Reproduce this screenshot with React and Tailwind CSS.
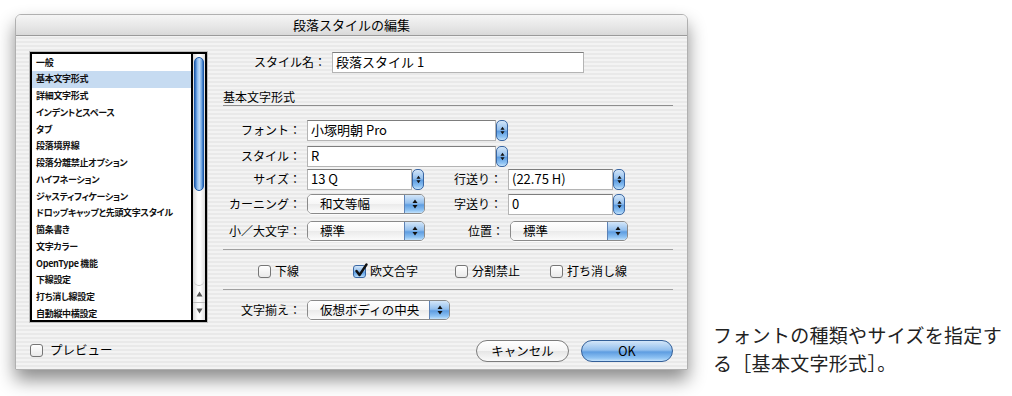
import React from 'react'

const jp = "font-['Noto_Sans_CJK_JP','Noto_Sans',sans-serif]"

const items = [
  '一般',
  '基本文字形式',
  '詳細文字形式',
  'インデントとスペース',
  'タブ',
  '段落境界線',
  '段落分離禁止オプション',
  'ハイフネーション',
  'ジャスティフィケーション',
  'ドロップキャップと先頭文字スタイル',
  '箇条書き',
  '文字カラー',
  'OpenType 機能',
  '下線設定',
  '打ち消し線設定',
  '自動縦中横設定',
]

const aqua =
  'bg-[linear-gradient(180deg,#d3e6f9_0%,#94c0ee_45%,#5e9de1_55%,#8fc3f3_85%,#c4e2fb_100%)]'

function Arrows({ w = 6, h = 12 }) {
  return (
    <svg width={w} height={h} viewBox="0 0 6 12">
      <path d="M3 1.5 L5.5 5 H0.5 Z" fill="#111" />
      <path d="M3 10.5 L5.5 7 H0.5 Z" fill="#111" />
    </svg>
  )
}

function Stepper() {
  return (
    <div
      className={`w-[12px] h-[21px] rounded-[5px] border border-[#3a67a3] flex items-center justify-center ${aqua}`}
    >
      <Arrows w={5} h={11} />
    </div>
  )
}

function Field({ text, width }) {
  return (
    <div
      className="h-[21px] bg-white border border-[#b4b4b4] border-t-[#7d7d7d] text-[13px] leading-[17px] pl-[3px] text-black"
      style={{ width }}
    >
      {text}
    </div>
  )
}

function Combo({ text, width }) {
  return (
    <div className="flex items-center">
      <Field text={text} width={width} />
      <Stepper />
    </div>
  )
}

function Popup({ text, width = 118 }) {
  return (
    <div
      className="h-[20px] flex rounded-[5px] border border-[#8a8a8a] overflow-hidden shadow-[0_1px_0_rgba(255,255,255,0.8)]"
      style={{ width }}
    >
      <div className="flex-1 bg-[linear-gradient(180deg,#ffffff_0%,#f6f6f6_50%,#ebebeb_52%,#fbfbfb_100%)] text-[12.5px] leading-[18px] pl-[12px] text-black">
        {text}
      </div>
      <div className={`w-[20px] border-l border-[#5d82b5] flex items-center justify-center ${aqua}`}>
        <Arrows w={6} h={12} />
      </div>
    </div>
  )
}

function Check({ label, checked }) {
  return (
    <div className="flex items-center gap-[4px]">
      <div
        className={`relative w-[13px] h-[13px] rounded-[3px] border ${
          checked ? `border-[#3a67a3] ${aqua}` : 'border-[#767676] bg-[linear-gradient(180deg,#ffffff,#e9e9e9)]'
        }`}
      >
        {checked && (
          <svg className="absolute -top-[3px] left-[0px]" width="15" height="15" viewBox="0 0 15 15">
            <path d="M2.5 8 L5.5 12 L12.5 1.5" fill="none" stroke="#111" strokeWidth="2.4" strokeLinecap="round" strokeLinejoin="round" />
          </svg>
        )}
      </div>
      <span className="text-[12px] leading-[14px] text-black">{label}</span>
    </div>
  )
}

function Label({ children, w = 84 }) {
  return (
    <div className="text-right pr-[6px] text-[12px] text-black shrink-0" style={{ width: w }}>
      {children}
    </div>
  )
}

function Scrollbar() {
  return (
    <div className="w-[14px] flex flex-col border-l-2 border-black bg-[linear-gradient(90deg,#d9d9d9,#ffffff_40%,#ffffff_60%,#dedede)]">
      <div className="flex-1 px-[1px] pt-[3px] flex flex-col">
        <div className="h-[134px] rounded-full border border-[#1d5aa8] bg-[linear-gradient(90deg,#2a68bb,#8dbcf0_30%,#c0dcf8_55%,#6aa2e0_85%,#2a68bb)]" />
        <div className="flex-1 rounded-b-full border-b border-[#c4c4c4]" />
      </div>
      <div className="h-[34px] flex flex-col items-center">
        <div className="h-[17px] flex items-center justify-center border-b border-[#bdbdbd] w-full">
          <svg width="7" height="6" viewBox="0 0 7 6">
            <path d="M3.5 0.5 L6.5 5.5 H0.5 Z" fill="#555" />
          </svg>
        </div>
        <div className="h-[16px] flex items-center justify-center">
          <svg width="7" height="6" viewBox="0 0 7 6">
            <path d="M3.5 5.5 L6.5 0.5 H0.5 Z" fill="#555" />
          </svg>
        </div>
      </div>
    </div>
  )
}

function ListBox() {
  return (
    <div className="mt-[1px] h-[270px] border-2 border-black flex bg-white shadow-[0_0_0_1px_#bdbdbd]">
      <div className="flex-1 overflow-hidden">
        {items.map((it, i) => (
          <div
            key={it}
            className={`h-[16.75px] pl-[4px] flex items-center text-[9px] tracking-[-0.3px] font-bold text-[#111] [font-feature-settings:'palt'] whitespace-nowrap ${
              i === 1 ? 'bg-[#c6dbf1]' : ''
            }`}
          >
            {it}
          </div>
        ))}
      </div>
      <Scrollbar />
    </div>
  )
}

export default function App() {
  return (
    <div className={`w-[1012px] h-[396px] bg-white flex ${jp}`}>
      <div className="ml-[15px] mt-[14px] w-[673px] h-[356px] flex flex-col rounded-t-[6px] border border-[#b0b0b0] bg-[repeating-linear-gradient(180deg,#f3f3f3_0px,#f3f3f3_2px,#e9e9e9_2px,#e9e9e9_4px)] shadow-[0_10px_18px_rgba(0,0,0,0.45)] overflow-hidden">
        {/* title bar */}
        <div className="h-[21px] shrink-0 flex items-center justify-center bg-[linear-gradient(180deg,#f5f5f5,#e6e6e6_60%,#d9d9d9)] border-b border-[#9a9a9a] text-[13px] text-black">
          段落スタイルの編集
        </div>

        <div className="flex px-[14px] pt-[15px]">
          {/* left: category list */}
          <div className="w-[177px] shrink-0 flex flex-col">
            <ListBox />
            <div className="mt-[19px]">
              <div className="flex items-center gap-[7px]">
                <div className="w-[13px] h-[13px] rounded-[3px] border border-[#767676] bg-[linear-gradient(180deg,#ffffff,#e9e9e9)]" />
                <span className="text-[12.5px] text-black">プレビュー</span>
              </div>
            </div>
          </div>

          {/* right: settings */}
          <div className="ml-[16px] w-[450px] flex flex-col">
            <div className="flex items-center h-[22px]">
              <Label w={109}>スタイル名：</Label>
              <Field text="段落スタイル 1" width={252} />
            </div>

            <div className="mt-[16px] h-[17px] border-b border-[#8e8e8e] text-[12px] leading-[16px] text-black">
              基本文字形式
            </div>

            <div className="mt-[13px] flex items-center h-[22px]">
              <Label>フォント：</Label>
              <Combo text="小塚明朝 Pro" width={189} />
            </div>
            <div className="mt-[4px] flex items-center h-[22px]">
              <Label>スタイル：</Label>
              <Combo text="R" width={189} />
            </div>
            <div className="mt-[1px] flex items-center h-[22px]">
              <Label>サイズ：</Label>
              <div className="w-[118px]">
                <Combo text="13 Q" width={105} />
              </div>
              <Label w={83}>行送り：</Label>
              <Combo text="(22.75 H)" width={105} />
            </div>
            <div className="mt-[3px] flex items-center h-[22px]">
              <Label>カーニング：</Label>
              <Popup text="和文等幅" />
              <Label w={83}>字送り：</Label>
              <Combo text="0" width={105} />
            </div>
            <div className="mt-[5px] flex items-center h-[22px]">
              <Label>小／大文字：</Label>
              <Popup text="標準" />
              <Label w={85}>位置：</Label>
              <Popup text="標準" />
            </div>

            <div className="mt-[7px] border-t border-[#a0a0a0]" />

            <div className="mt-[14px] h-[14px] flex items-center pl-[35px]">
              <div className="w-[95px]">
                <Check label="下線" />
              </div>
              <div className="w-[102px]">
                <Check label="欧文合字" checked />
              </div>
              <div className="w-[95px]">
                <Check label="分割禁止" />
              </div>
              <Check label="打ち消し線" />
            </div>

            <div className="mt-[11px] border-t border-[#a0a0a0]" />

            <div className="mt-[10px] flex items-center h-[20px]">
              <Label>文字揃え：</Label>
              <Popup text="仮想ボディの中央" width={143} />
            </div>

            <div className="mt-[20px] flex justify-end gap-[12px]">
              <div className="w-[93px] h-[22px] rounded-full border border-[#7c7c7c] bg-[linear-gradient(180deg,#ffffff_0%,#f4f4f4_50%,#e6e6e6_52%,#fafafa_100%)] flex items-center justify-center text-[12.5px] text-black">
                キャンセル
              </div>
              <div
                className={`w-[92px] h-[22px] rounded-full border border-[#335f98] flex items-center justify-center text-[12.5px] text-black ${aqua}`}
              >
                OK
              </div>
            </div>
          </div>
        </div>
      </div>

      {/* caption */}
      <div className="ml-[25px] mt-[321px] text-[19px] leading-[27.5px] text-[#222] whitespace-nowrap tracking-[0.3px]">
        <div>フォントの種類やサイズを指定す</div>
        <div>る［基本文字形式］。</div>
      </div>
    </div>
  )
}
